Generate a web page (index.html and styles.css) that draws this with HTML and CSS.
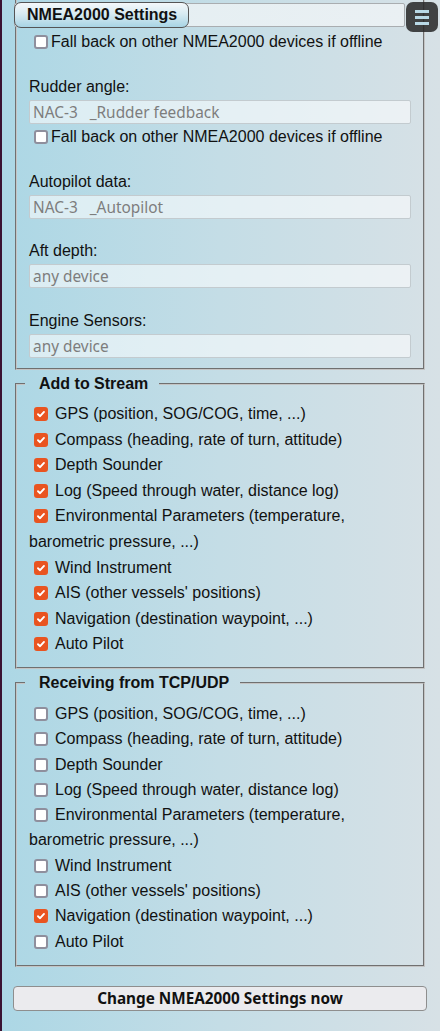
FILE: index.html
```html
<!DOCTYPE html>
<html lang="en">
<head>
<meta charset="utf-8">
<title>NMEA2000 Settings</title>
<link rel="stylesheet" href="styles.css">
</head>
<body>
<div class="page">
  <fieldset class="fs fs-main">
    <div class="head"><button class="head-legend" type="button">NMEA2000 Settings</button></div>
    <label class="cb-row cb-first"><input type="checkbox" class="cb cb-tight">Fall back on other NMEA2000 devices if offline</label>
    <div class="field field-after-cb">
      <label class="field-label">Rudder angle:</label>
      <input class="dev" type="text" value="NAC-3   _Rudder feedback" readonly>
    </div>
    <label class="cb-row"><input type="checkbox" class="cb cb-tight">Fall back on other NMEA2000 devices if offline</label>
    <div class="field field-after-cb">
      <label class="field-label">Autopilot data:</label>
      <input class="dev" type="text" value="NAC-3   _Autopilot" readonly>
    </div>
    <div class="field field-after-input">
      <label class="field-label">Aft depth:</label>
      <input class="dev" type="text" value="any device" readonly>
    </div>
    <div class="field field-after-input field-last">
      <label class="field-label">Engine Sensors:</label>
      <input class="dev" type="text" value="any device" readonly>
    </div>
  </fieldset>

  <fieldset class="fs fs-list fs-add">
    <legend class="legend">Add to Stream</legend>
    <label class="item"><input type="checkbox" class="cb" checked>GPS (position, SOG/COG, time, ...)</label>
    <label class="item"><input type="checkbox" class="cb" checked>Compass (heading, rate of turn, attitude)</label>
    <label class="item"><input type="checkbox" class="cb" checked>Depth Sounder</label>
    <label class="item"><input type="checkbox" class="cb" checked>Log (Speed through water, distance log)</label>
    <label class="item"><input type="checkbox" class="cb" checked>Environmental Parameters (temperature, barometric pressure, ...)</label>
    <label class="item"><input type="checkbox" class="cb" checked>Wind Instrument</label>
    <label class="item"><input type="checkbox" class="cb" checked>AIS (other vessels' positions)</label>
    <label class="item"><input type="checkbox" class="cb" checked>Navigation (destination waypoint, ...)</label>
    <label class="item"><input type="checkbox" class="cb" checked>Auto Pilot</label>
  </fieldset>

  <fieldset class="fs fs-list fs-recv">
    <legend class="legend">Receiving from TCP/UDP</legend>
    <label class="item"><input type="checkbox" class="cb">GPS (position, SOG/COG, time, ...)</label>
    <label class="item"><input type="checkbox" class="cb">Compass (heading, rate of turn, attitude)</label>
    <label class="item"><input type="checkbox" class="cb">Depth Sounder</label>
    <label class="item"><input type="checkbox" class="cb">Log (Speed through water, distance log)</label>
    <label class="item"><input type="checkbox" class="cb">Environmental Parameters (temperature, barometric pressure, ...)</label>
    <label class="item"><input type="checkbox" class="cb">Wind Instrument</label>
    <label class="item"><input type="checkbox" class="cb">AIS (other vessels' positions)</label>
    <label class="item"><input type="checkbox" class="cb" checked>Navigation (destination waypoint, ...)</label>
    <label class="item"><input type="checkbox" class="cb">Auto Pilot</label>
  </fieldset>

  <button class="submit" type="button">Change NMEA2000 Settings now</button>
</div>

<button class="menu" type="button" aria-label="Menu">
  <svg width="14" height="15" viewBox="0 0 14 15"><rect x="0" y="0" width="14" height="3" fill="#b9d9e6"/><rect x="0" y="6" width="14" height="3" fill="#b9d9e6"/><rect x="0" y="12" width="14" height="3" fill="#b9d9e6"/></svg>
</button>
</body>
</html>
```

FILE: styles.css
```css
html, body {
  margin: 0;
  padding: 0;
}

body {
  min-height: 1031px;
  background: linear-gradient(90deg, #acd7e5 0%, #c4dde6 50%, #d7e1e6 100%);
  box-shadow: inset 2px 0 0 #3a1232;
  font-family: "Liberation Sans", Arial, sans-serif;
  font-size: 16px;
  color: #111;
}

.page {
  padding: 0 13px 20px 13px;
}

.fs {
  margin: 0 2px;
  border: 2px groove #c4c4c4;
  padding: 0 12px 10px 12px;
  min-width: 0;
}

.fs-main {
  border-top: none;
}

.head {
  margin: 3px 6px 0 -15px;
  height: 24px;
  box-sizing: border-box;
  border: 1px solid #a9adb0;
  border-radius: 2px;
  background: linear-gradient(90deg, #e2eef2, #eaf0f3);
  display: flex;
  align-items: center;
}

.head-legend {
  height: 26px;
  margin: -1px 0 0 -1px;
  padding: 0 11px 0 12px;
  border: 1px solid #555;
  border-radius: 7px;
  background: linear-gradient(180deg, #f4f8fa 0%, #d8ebf2 45%, #a8d4e4 100%);
  font-family: "Liberation Sans", Arial, sans-serif;
  font-weight: bold;
  font-size: 16px;
  color: #111;
}

.cb-row {
  display: block;
  line-height: 20px;
  margin-top: 3px;
}

.cb-first {
  margin-top: 5px;
}

.field-after-cb {
  margin-top: 25px;
}

.field-after-input {
  margin-top: 22px;
}

.field-last {
  margin-top: 23px;
}

.field-label {
  display: block;
  line-height: 20px;
}

.dev {
  display: block;
  width: 100%;
  height: 24px;
  box-sizing: border-box;
  margin: 3px 0 0 0;
  padding: 0 3px;
  border: 1px solid #c3cbcf;
  border-radius: 2px;
  background: rgba(255, 255, 255, 0.55);
  font-family: "Noto Sans", sans-serif;
  font-size: 15.4px;
  color: #7d7d7d;
  outline: none;
}

.cb {
  appearance: none;
  -webkit-appearance: none;
  width: 14px;
  height: 14px;
  box-sizing: border-box;
  border: 2px solid #8f8f9d;
  border-radius: 3px;
  background-color: #fff;
  margin: 0 7px 0 5px;
  vertical-align: -2px;
}

.cb-tight {
  margin-right: 3px;
}

.cb:checked {
  background-color: #e95420;
  border-color: #e95420;
  background-image: url("data:image/svg+xml,%3Csvg xmlns='http://www.w3.org/2000/svg' viewBox='0 0 10 10'%3E%3Cpath d='M2 5.2 L4.1 7.2 L8 2.9' fill='none' stroke='white' stroke-width='1.9' stroke-linecap='round' stroke-linejoin='round'/%3E%3C/svg%3E");
  background-size: 10px 10px;
  background-position: center;
  background-repeat: no-repeat;
}

.fs-list {
  margin-top: 4px;
}

.fs-add {
  padding-top: 7px;
}

.fs-recv {
  padding-top: 8px;
  padding-bottom: 11px;
}

.legend {
  font-weight: bold;
  font-size: 16px;
  line-height: 20px;
  padding: 0 11px 0 14px;
  margin-left: -4px;
}

.item {
  display: block;
  line-height: 25.6px;
}

.fs-recv .item {
  line-height: 25.3px;
}

.submit {
  display: block;
  width: 100%;
  height: 25px;
  margin-top: 19px;
  border: 1px solid #8e8e8e;
  border-radius: 4px;
  background: #ebebee;
  font-family: "Noto Sans", sans-serif;
  font-weight: bold;
  font-size: 15.3px;
  color: #111;
  padding: 0;
}

.menu {
  position: absolute;
  top: 2px;
  right: 2px;
  width: 32px;
  height: 30px;
  border: none;
  border-radius: 7px;
  background: rgba(40, 40, 40, 0.86);
  display: flex;
  align-items: center;
  justify-content: center;
  padding: 0;
}
```
